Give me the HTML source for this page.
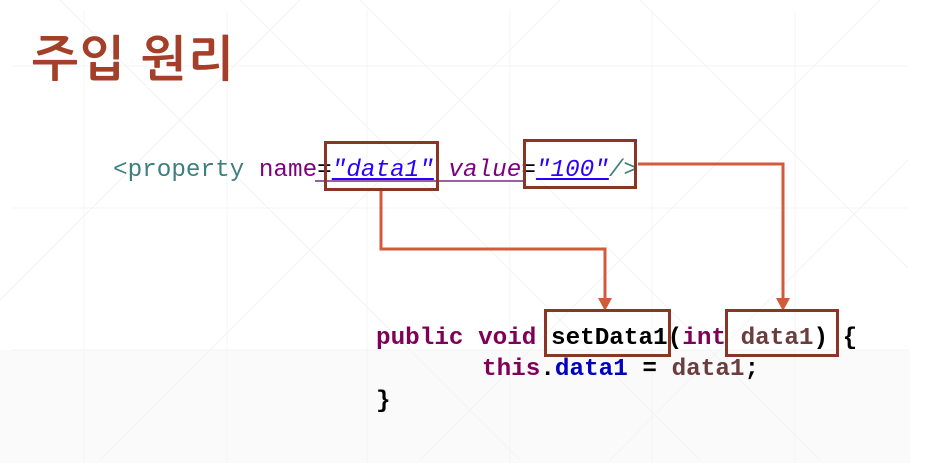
<!DOCTYPE html>
<html><head><meta charset="utf-8">
<style>
html,body{margin:0;padding:0;}
body{width:934px;height:463px;position:relative;overflow:hidden;background:#fff;}
.t{position:absolute;left:32px;top:32px;font-family:"Liberation Sans","NanumGothic","Noto Sans CJK KR",sans-serif;font-weight:bold;font-size:49px;color:#a4402a;letter-spacing:1px;white-space:nowrap;}
.code{position:absolute;font-family:"Liberation Mono",monospace;font-size:24.3px;white-space:pre;line-height:1;}
.box{position:absolute;border:3px solid #8a3626;box-sizing:border-box;}
</style></head><body>
<svg width="934" height="463" style="position:absolute;left:0;top:0">
<rect x="0" y="350" width="910" height="113" fill="#fafafa"/>
<rect x="910" y="0" width="24" height="463" fill="#fff"/>
<g stroke="#f4f4f4" stroke-width="1" fill="none">
<line x1="12" y1="66" x2="908" y2="66"/>
<line x1="12" y1="208" x2="908" y2="208"/>
<line x1="12" y1="350" x2="908" y2="350"/>
<line x1="84" y1="10" x2="84" y2="463"/>
<line x1="227" y1="10" x2="227" y2="463"/>
<line x1="367" y1="10" x2="367" y2="463"/>
<line x1="510" y1="10" x2="510" y2="463"/>
<line x1="652" y1="10" x2="652" y2="463"/>
<line x1="795" y1="10" x2="795" y2="463"/>
<line x1="0" y1="-60" x2="520" y2="460"/>
<line x1="180" y1="-60" x2="700" y2="460"/>
<line x1="360" y1="0" x2="820" y2="460"/>
<line x1="640" y1="0" x2="908" y2="268"/>
<line x1="300" y1="0" x2="0" y2="300"/>
<line x1="560" y1="0" x2="100" y2="460"/>
<line x1="880" y1="0" x2="420" y2="460"/>
<line x1="908" y1="160" x2="610" y2="460"/>
</g>
<g stroke="#d55a3c" stroke-width="3" fill="none">
<polyline points="381,190 381,249 605,249 605,300"/>
<polyline points="638,164 783,164 783,300"/>
</g>
<polygon points="598,298 612,298 605,311" fill="#d55a3c"/>
<polygon points="776,298 790,298 783,311" fill="#d55a3c"/>
<line x1="315" y1="181" x2="525" y2="181" stroke="#7a2a8a" stroke-width="1.5"/>
</svg>
<div class="t">주입 원리</div>
<div class="code" style="left:113px;top:159px;"><span style="color:#3f7f7f">&lt;property</span> <span style="color:#7f007f">name</span><span style="color:#000">=</span><i style="color:#2a00ff;text-decoration:underline">"data1"</i> <i style="color:#7f007f">value</i><span style="color:#000">=</span><i style="color:#2a00ff;text-decoration:underline">"100"</i><i style="color:#3f7f7f">/&gt;</i></div>
<div class="code" style="left:376px;top:327px;font-weight:bold"><span style="color:#7f0055">public void</span> <span style="color:#000">setData1</span>(<span style="color:#7f0055">int</span> <span style="color:#6a3e3e">data1</span>) {</div>
<div class="code" style="left:482px;top:358px;font-weight:bold"><span style="color:#7f0055">this</span>.<span style="color:#0000c0">data1</span> = <span style="color:#6a3e3e">data1</span>;</div>
<div class="code" style="left:376px;top:390px;font-weight:bold">}</div>
<div class="box" style="left:324px;top:141px;width:115px;height:50px"></div>
<div class="box" style="left:523px;top:139px;width:114px;height:50px"></div>
<div class="box" style="left:544px;top:309px;width:127px;height:48px"></div>
<div class="box" style="left:725px;top:309px;width:114px;height:48px"></div>
</body></html>
